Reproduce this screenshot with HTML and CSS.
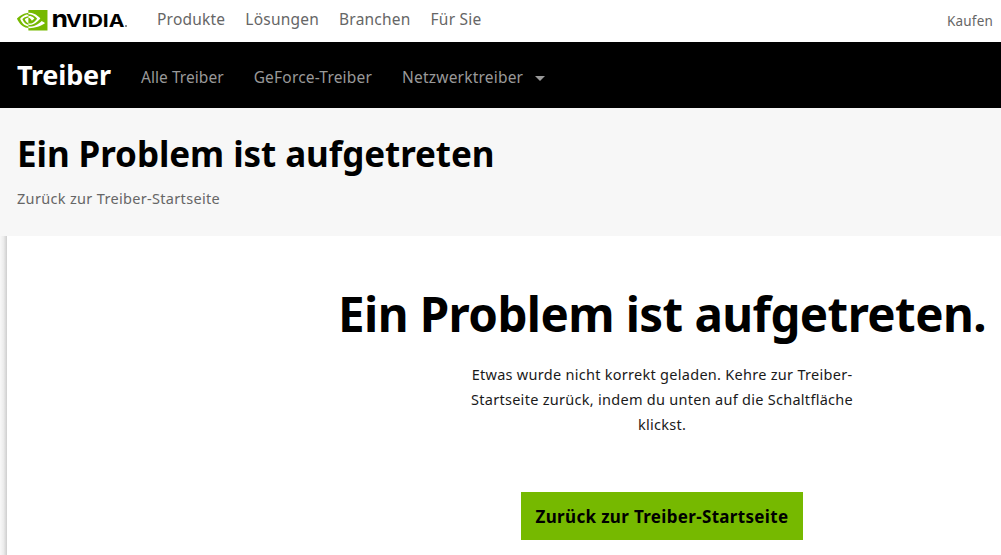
FILE: index.html
```html
<!DOCTYPE html>
<html lang="de">
<head>
<meta charset="utf-8">
<title>Treiber</title>
<link rel="stylesheet" href="styles.css">
</head>
<body>
<header class="global-nav">
  <svg class="logo" width="112" height="32" viewBox="0 -5 112 32" role="img" aria-label="NVIDIA">
    <path fill="#76b900" transform="translate(0 -4.2) scale(1.27 1.29)" d="M8.948 8.798v-1.43a6.7 6.7 0 0 1 .424-.018c3.922-.124 6.493 3.374 6.493 3.374s-2.774 3.851-5.75 3.851c-.398 0-.787-.062-1.158-.185v-4.346c1.528.185 1.837.857 2.747 2.385l2.04-1.714s-1.492-1.952-4-1.952a6.016 6.016 0 0 0-.796.035m0-4.735v2.138l.424-.027c5.45-.185 9.01 4.47 9.01 4.47s-4.08 4.964-8.33 4.964c-.37 0-.733-.035-1.095-.097v1.325c.3.035.61.062.91.062 3.957 0 6.82-2.023 9.593-4.408.459.371 2.34 1.263 2.73 1.652-2.633 2.208-8.772 3.984-12.253 3.984-.335 0-.653-.018-.971-.053v1.864H24V4.063zm0 10.326v1.131c-3.657-.654-4.673-4.46-4.673-4.46s1.758-1.944 4.673-2.262v1.237H8.94c-1.528-.186-2.73 1.245-2.73 1.245s.68 2.412 2.739 3.11M2.456 10.9s2.164-3.197 6.5-3.533V6.201C4.153 6.59 0 10.653 0 10.653s2.35 6.802 8.948 7.42v-1.237c-4.84-.6-6.492-5.936-6.492-5.936z"/>
    <text class="wordmark-n" x="34.4" y="17.7" textLength="16.5" lengthAdjust="spacingAndGlyphs">n</text>
    <text class="wordmark" x="49" y="17.7" textLength="58.5" lengthAdjust="spacingAndGlyphs">VIDIA</text>
    <circle cx="109" cy="17" r=".8"/>
  </svg>
  <nav class="global-links">
    <a>Produkte</a><a>Lösungen</a><a>Branchen</a><a>Für Sie</a>
  </nav>
  <a class="buy">Kaufen</a>
</header>
<div class="sub-nav">
  <span class="brand">Treiber</span>
  <nav class="sub-links">
    <a>Alle Treiber</a><a class="wide">GeForce-Treiber</a><a class="wide">Netzwerktreiber<svg class="caret" width="10" height="5" viewBox="0 0 10 5"><path d="M0 0h10L5 5z" fill="currentColor"/></svg></a>
  </nav>
</div>
<section class="page-head">
  <h1 class="page-title">Ein Problem ist aufgetreten</h1>
  <a class="back-link">Zurück zur Treiber-Startseite</a>
</section>
<main class="content">
  <div class="edge"></div>
  <div class="message">
    <h2 class="message-title">Ein Problem ist aufgetreten.</h2>
    <p class="message-text">Etwas wurde nicht korrekt geladen. Kehre zur Treiber-<br>Startseite zurück, indem du unten auf die Schaltfläche<br>klickst.</p>
    <a class="button">Zurück zur Treiber-Startseite</a>
  </div>
</main>
</body>
</html>
```
FILE: styles.css
```css
* { box-sizing: border-box; }
body { margin: 0; width: 1001px; height: 555px; overflow: hidden; background: #fff; color: #000; font-family: "Noto Sans", sans-serif; }
a { white-space: nowrap; }
h1, h2, p { margin: 0; white-space: nowrap; }

.global-nav { display: flex; height: 42px; padding: 0 8px 0 17px; }
.logo { margin-top: 4px; flex: none; overflow: visible; }
.wordmark { font: 700 18px Inter, sans-serif; }
.wordmark-n { font: 700 23.5px Inter, sans-serif; }
.global-links { display: flex; gap: 20px; margin-left: 28px; font-size: 15.5px; line-height: 39px; letter-spacing: .22px; color: #666; }
.buy { margin-left: auto; font-size: 13.5px; line-height: 42px; letter-spacing: .2px; color: #666; }

.sub-nav { display: flex; height: 66px; padding-left: 17px; background: #000; }
.brand { width: 124px; font-size: 27px; font-weight: 700; line-height: 66px; letter-spacing: -.2px; color: #fff; }
.sub-links { display: flex; gap: 30px; font-size: 15.5px; line-height: 70px; letter-spacing: .05px; color: #999; }
.sub-links a { display: flex; align-items: center; height: 70px; }
.sub-links .wide { letter-spacing: .2px; }
.caret { margin: 3px 0 0 12px; }

.page-head { height: 128px; padding: 21px 17px 0; background: #f7f7f7; }
.page-title { font-size: 35px; font-weight: 700; line-height: 50px; letter-spacing: -.08px; }
.back-link { display: block; margin-top: 7px; font-size: 14.5px; line-height: 24px; letter-spacing: .32px; color: #666; }

.content { display: flex; height: 319px; }
.edge { flex: none; width: 7px; background: linear-gradient(to right, #f8f8f8 0, #ececec 50%, #cecece 100%); }
.message { display: flex; flex-direction: column; align-items: center; width: 994px; padding: 48px 0 0 316px; }
.message-title { font-size: 47.5px; font-weight: 700; line-height: 60px; letter-spacing: -.58px; }
.message-text { margin-top: 18px; font-size: 14.5px; line-height: 25px; letter-spacing: .28px; text-align: center; color: #1a1a1a; }
.button { width: 282px; height: 48px; margin-top: 55px; background: #76b900; font-size: 17px; font-weight: 700; line-height: 49px; letter-spacing: .33px; text-align: center; }
```
